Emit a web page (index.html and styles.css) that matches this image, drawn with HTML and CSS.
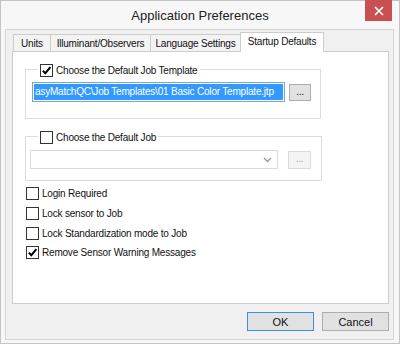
FILE: index.html
```html
<!DOCTYPE html>
<html lang="en">
<head>
  <meta charset="UTF-8">
  <title>Application Preferences</title>
  <link rel="stylesheet" href="styles.css">
</head>
<body>
  <div class="window">

    <!-- title bar -->
    <div class="titlebar">
      <span></span>
      <span class="title">Application Preferences</span>
      <span class="close">
        <svg width="10" height="10" viewBox="0 0 10 10"><path d="M1 1 L9 9 M9 1 L1 9" stroke="#fff" stroke-width="1.6"/></svg>
      </span>
    </div>

    <div class="client">
      <!-- tabs -->
      <div class="tabs">
        <div class="tab tab-units">Units</div>
        <div class="tab tab-illum">Illuminant/Observers</div>
        <div class="tab tab-lang">Language Settings</div>
        <div class="tab tab-startup active">Startup Defaults</div>
      </div>

      <div class="panel">
        <!-- job template group -->
        <div class="group group-template">
          <div class="legend">
            <span class="cb">
              <svg width="11" height="11" viewBox="0 0 11 11"><path d="M1.8 5.6 L4.3 8.2 L9.4 2.2" fill="none" stroke="#000" stroke-width="2"/></svg>
            </span>
            <span>Choose the Default Job Template</span>
          </div>
          <div class="row">
            <div class="textbox"><span class="sel">asyMatchQC\Job Templates\01 Basic Color Template.jtp</span></div>
            <div class="btn btn-browse">...</div>
          </div>
        </div>

        <!-- default job group -->
        <div class="group group-job">
          <div class="legend">
            <span class="cb"></span>
            <span>Choose the Default Job</span>
          </div>
          <div class="row">
            <div class="combo">
              <svg width="9" height="6" viewBox="0 0 9 6"><path d="M1 1 L4.5 4.5 L8 1" fill="none" stroke="#9a9a9a" stroke-width="1.4"/></svg>
            </div>
            <div class="btn btn-browse disabled">...</div>
          </div>
        </div>

        <!-- options -->
        <div class="options">
          <div class="option"><span class="cb"></span><span>Login Required</span></div>
          <div class="option"><span class="cb"></span><span>Lock sensor to Job</span></div>
          <div class="option"><span class="cb"></span><span>Lock Standardization mode to Job</span></div>
          <div class="option last">
            <span class="cb">
              <svg width="11" height="11" viewBox="0 0 11 11"><path d="M1.8 5.6 L4.3 8.2 L9.4 2.2" fill="none" stroke="#000" stroke-width="2"/></svg>
            </span>
            <span>Remove Sensor Warning Messages</span>
          </div>
        </div>
      </div>

      <!-- dialog buttons -->
      <div class="buttons">
        <div class="btn btn-dialog default">OK</div>
        <div class="btn btn-dialog">Cancel</div>
      </div>
    </div>
  </div>
</body>
</html>
```

FILE: styles.css
```css
body {
  margin: 0;
  background: #ffffff;
  font-family: "Liberation Sans", Arial, sans-serif;
  font-size: 10px;
  letter-spacing: -0.2px;
  color: #111;
}

.window {
  width: 400px;
  height: 344px;
  box-sizing: border-box;
  border: 1px solid #c4c4c4;
  background: #f7f7f7;
  display: flex;
  flex-direction: column;
}

/* ===== Title bar ===== */
.titlebar {
  height: 28px;
  display: grid;
  grid-template-columns: 1fr auto 1fr;
  align-items: center;
}

.title {
  font-size: 13px;
  letter-spacing: 0;
  color: #222;
  padding-top: 1px;
}

.close {
  justify-self: end;
  align-self: start;
  margin-top: -1px;
  margin-right: 7px;
  width: 27px;
  height: 21px;
  background: #c75050;
  display: flex;
  align-items: center;
  justify-content: center;
}

/* ===== Client area ===== */
.client {
  margin: 0 5px 3px 4px;
  flex: 1;
  background: #f0f0f0;
  border: 1px solid #d6d6d6;
  padding: 2px 4px 0 6px;
  display: flex;
  flex-direction: column;
}

.tabs {
  display: flex;
  align-items: flex-end;
  padding-left: 1px;
  position: relative;
  z-index: 1;
}

.tab {
  height: 17px;
  box-sizing: border-box;
  border: 1px solid #cccccc;
  border-bottom: none;
  background: #f3f3f3;
  margin-right: -1px;
  display: flex;
  align-items: center;
  justify-content: center;
  padding-top: 1px;
}

.tab-units { width: 38px; }
.tab-illum { width: 101px; }
.tab-lang { width: 91px; }
.tab-startup { width: 84px; }

.tab.active {
  height: 20px;
  background: #ffffff;
  margin-bottom: -1px;
  padding-bottom: 3px;
}

.panel {
  height: 253px;
  box-sizing: border-box;
  background: #ffffff;
  border: 1px solid #cccccc;
  display: flex;
  flex-direction: column;
}

/* ===== Group boxes ===== */
.group {
  border: 1px solid #dcdcdc;
  box-sizing: border-box;
  margin-left: 12px;
  display: flex;
  flex-direction: column;
}

.group-template {
  width: 296px;
  margin-top: 17px;
  padding: 0 0 16px 6px;
}

.group-job {
  width: 297px;
  margin-top: 17px;
  padding: 0 0 11px 4px;
}

.legend {
  align-self: flex-start;
  margin-top: -6px;
  margin-left: 6px;
  padding: 0 2px;
  height: 13px;
  background: #ffffff;
  display: flex;
  align-items: center;
  gap: 3px;
}

.group-job .legend { margin-left: 8px; }

.cb {
  width: 13px;
  height: 13px;
  box-sizing: border-box;
  border: 1px solid #333333;
  background: #ffffff;
  display: flex;
  align-items: center;
  justify-content: center;
  flex-shrink: 0;
}

.row {
  display: flex;
  align-items: center;
}

.group-template .row { margin-top: 5px; }
.group-job .row { margin-top: 6px; }

.textbox {
  width: 253px;
  height: 20px;
  box-sizing: border-box;
  border: 1px solid #6fa8e0;
  background: #ffffff;
  padding: 1px;
  overflow: hidden;
  white-space: nowrap;
}

.sel {
  display: block;
  height: 16px;
  line-height: 16px;
  background: #3399ff;
  color: #ffffff;
  padding-left: 1px;
}

.combo {
  width: 248px;
  height: 19px;
  box-sizing: border-box;
  border: 1px solid #dadada;
  background: #ffffff;
  display: flex;
  align-items: center;
  justify-content: flex-end;
  padding-right: 5px;
}

.btn {
  box-sizing: border-box;
  border: 1px solid #adadad;
  background: #e1e1e1;
  display: flex;
  align-items: center;
  justify-content: center;
}

.btn-browse {
  width: 22px;
  height: 17px;
  margin-left: 4px;
  padding-bottom: 2px;
}

.btn-browse.disabled {
  width: 23px;
  height: 18px;
  margin-left: 10px;
  border-color: #dadada;
  background: #f4f4f4;
  color: #a0a0a0;
}

/* ===== Options ===== */
.options {
  margin: 2px 0 0 13px;
  display: flex;
  flex-direction: column;
}

.option {
  height: 20px;
  display: flex;
  align-items: center;
  gap: 3px;
}

.option.last {
  margin-top: -1px;
}

/* ===== Dialog buttons ===== */
.buttons {
  margin-top: 8px;
  display: flex;
  justify-content: flex-end;
  gap: 8px;
}

.btn-dialog {
  width: 67px;
  height: 19px;
  font-size: 11px;
  letter-spacing: 0;
}

.btn-dialog.default {
  border-color: #3c8fdc;
}
```
